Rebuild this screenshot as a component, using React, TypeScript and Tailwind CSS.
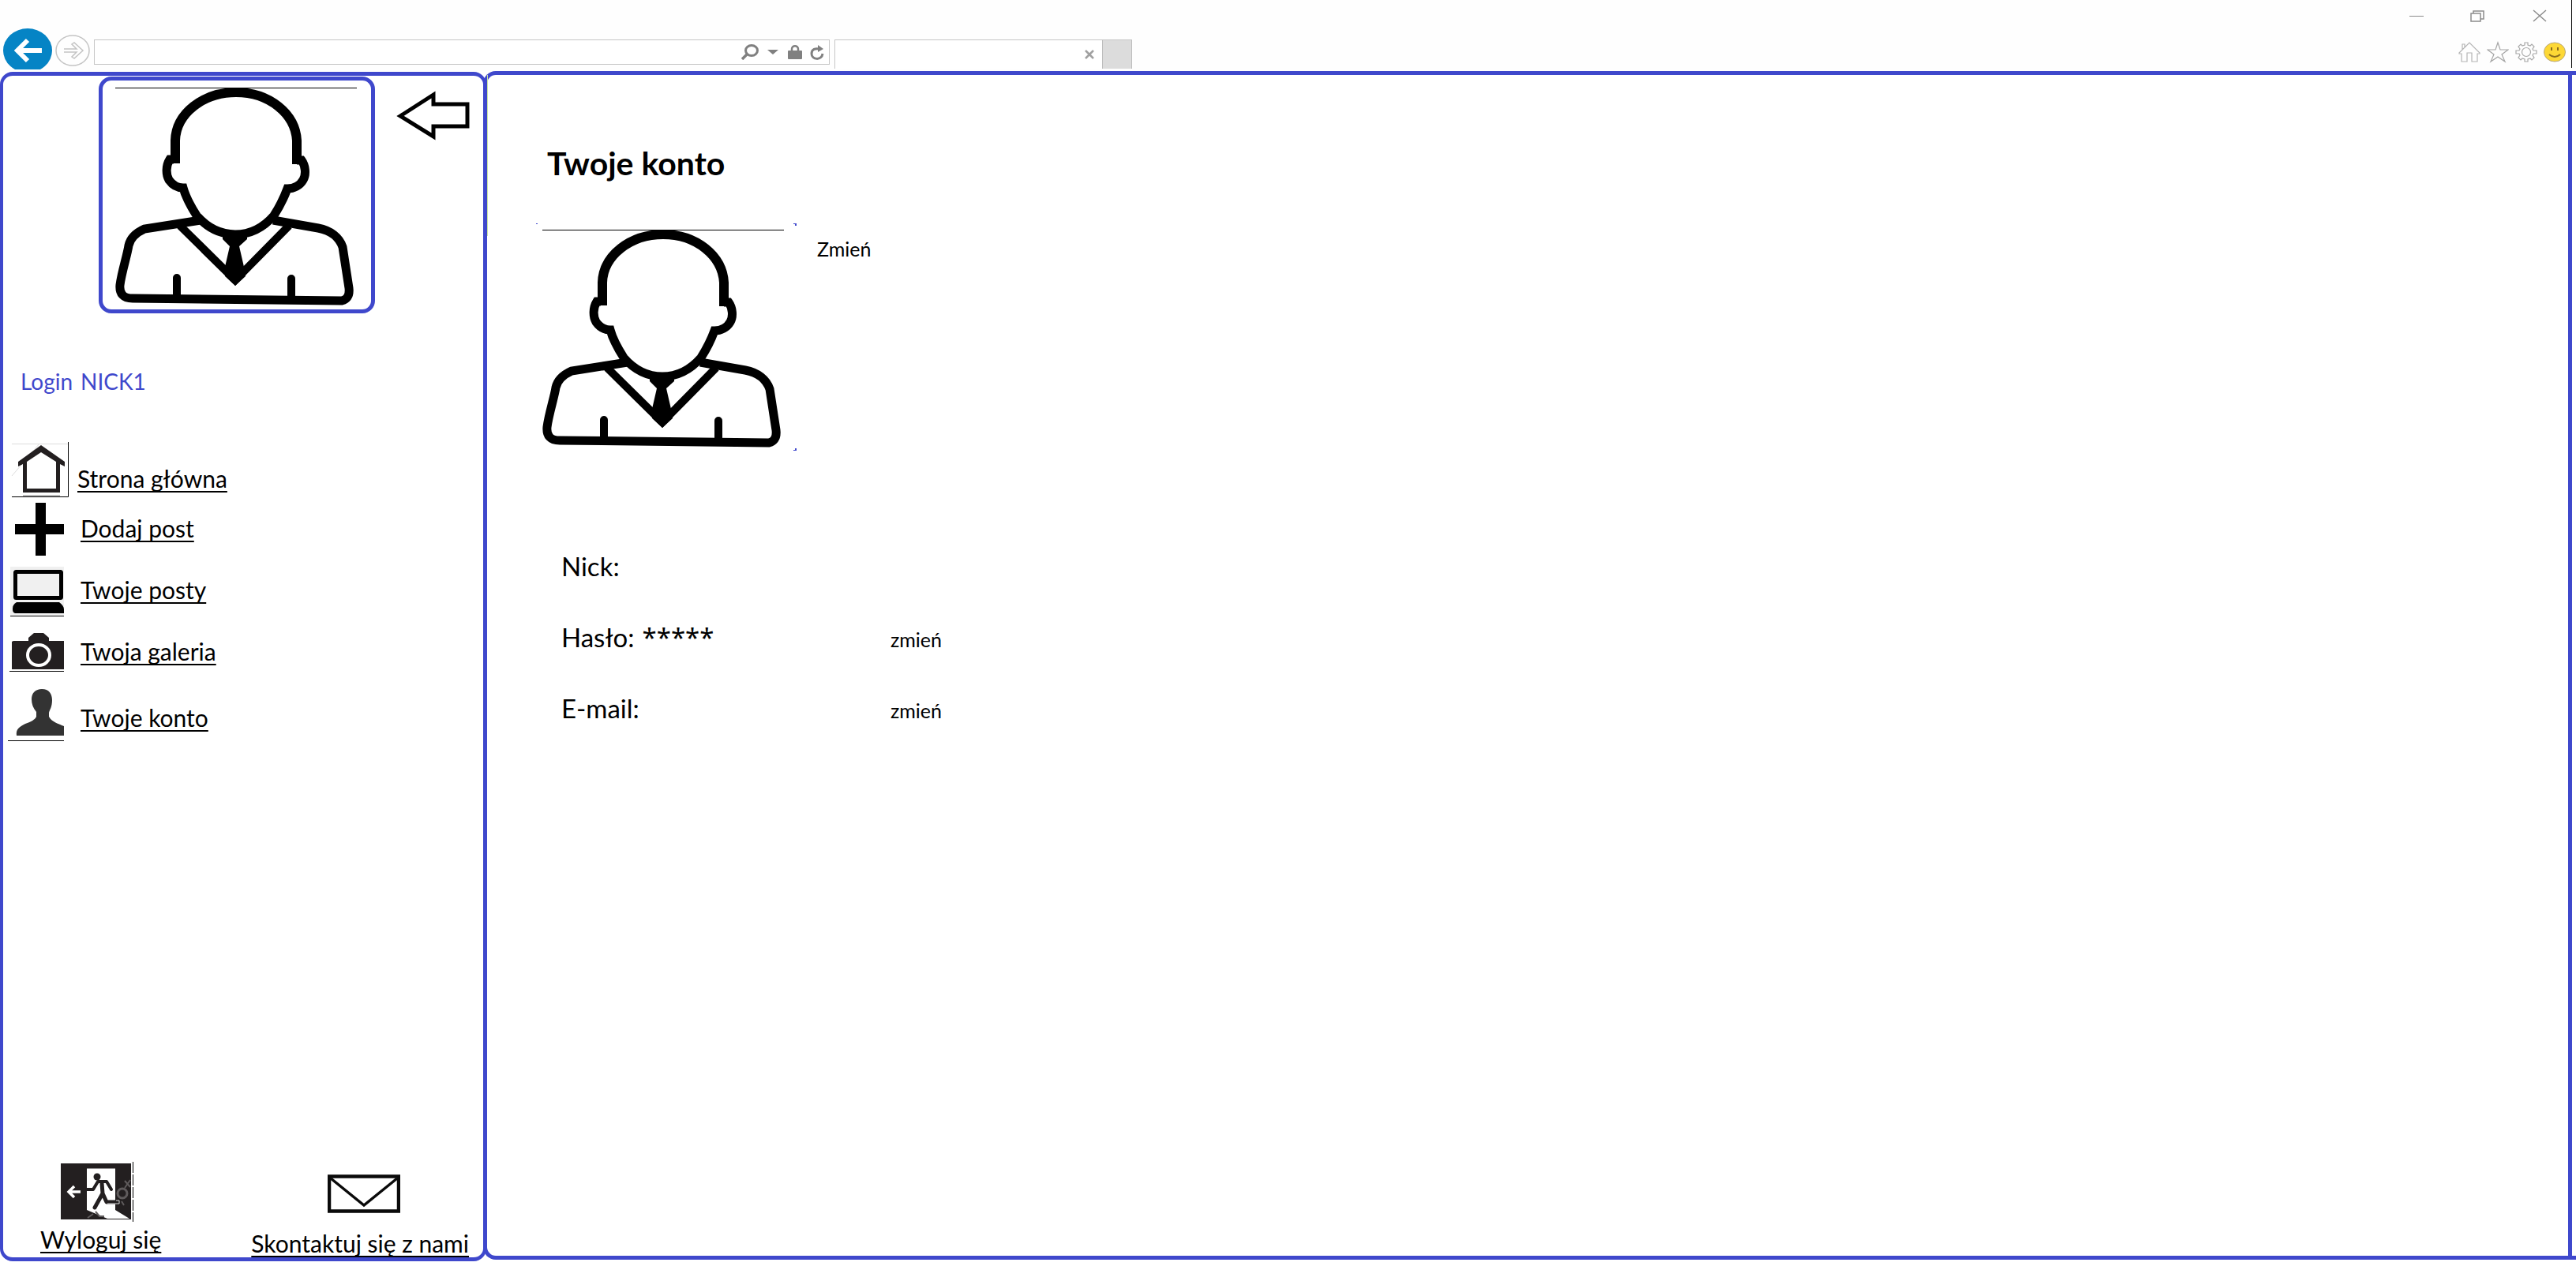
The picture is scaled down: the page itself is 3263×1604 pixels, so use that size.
import React from "react";

const BLUE = "#3f48cc";

function Portrait({ marks = false }: { marks?: boolean }) {
  return (
    <svg viewBox="137 103 330 288" className="block h-[288px] w-[330px]" fill="none" stroke="#000" role="img" aria-label="Avatar">
      <path d="M145 111.5H451" strokeWidth="1" />
      <g strokeWidth="11">
        <path d="M221 207V178C222 144 256 117 298 117S373 144 375 178V208" strokeWidth="12" />
        <path d="M219 202H214C209 210 209 221 213 228C218 235 225 238 231 238C234 249 241 262 248 273C261 288 278 297 297 297S333 288 346 273C353 262 359 250 363 239C371 239 379 235 383 228C387 221 386 210 381 203H375" />
        <path d="M253 279L182 290C171 295 164 302 162 311C160 324 153 345 151 361C150 372 155 378 167 378L432 381C439 379 442 374 441 365L433 313C429 301 418 292 402 289L345 279" />
        <path d="M227 286L297 355L365 286" strokeWidth="10" />
        <path d="M223 378V352M368 380V353" strokeLinecap="round" strokeWidth="10" />
      </g>
      <path d="M281 300H312V303L302 312L308 338L310 350L297 362L284 350L284 338L290 312L281 303Z" fill="#000" stroke="none" />
      {marks && (
        <path d="M137 103h2v1h-2zM463 103h4v3h-2v-2h-2zM463 390h2v-2h2v3h-4z" fill={BLUE} stroke="none" />
      )}
    </svg>
  );
}

function HomeDrawing() {
  return (
    <svg viewBox="10 560 80 72" className="h-[72px] w-[80px] shrink-0" aria-hidden="true">
      <path d="M15 562.5H86M50 562L15 603" stroke="#ddd" fill="none" />
      <path d="M86.5 560V629.5H15" stroke="#000" fill="none" />
      <path d="M52 564L82 585V591L76 588V624H29V588L23 591V585ZM52 573L34 585V619H71V585Z" fill="#231f20" fillRule="evenodd" />
      <path d="M29 628H76" stroke="#bbb" strokeWidth="2" />
    </svg>
  );
}

function PlusDrawing() {
  return (
    <svg viewBox="10 632 80 78" className="h-[78px] w-[80px] shrink-0" aria-hidden="true">
      <path d="M45 637H58V664H81V677H58V704H45V677H19V664H45Z" fill="#000" />
    </svg>
  );
}

function ComputerDrawing() {
  return (
    <svg viewBox="10 710 80 78" className="h-[78px] w-[80px] shrink-0" aria-hidden="true">
      <rect x="13" y="718" width="68" height="61" fill="#f0f0f0" />
      <rect x="19.5" y="724.5" width="58" height="33" rx="1" fill="#f0f0f0" stroke="#000" strokeWidth="5" />
      <path d="M21 763H75C79 766 81 769 81 772V777H19C16 776 16 773 16 771C16 767 18 765 21 763Z" fill="#000" />
      <path d="M13 780.5H81" stroke="#000" />
    </svg>
  );
}

function CameraDrawing() {
  return (
    <svg viewBox="10 788 80 78" className="h-[78px] w-[80px] shrink-0" aria-hidden="true">
      <path d="M15 813L17 812H36V808L43 802H55L62 808V812H81V848H15Z" fill="#231f20" />
      <ellipse cx="49" cy="830" rx="14" ry="13" fill="none" stroke="#fff" strokeWidth="4" />
      <path d="M12 850.5H81" stroke="#000" />
    </svg>
  );
}

function PersonDrawing() {
  return (
    <svg viewBox="10 866 80 90" className="h-[90px] w-[80px] shrink-0" aria-hidden="true">
      <path d="M53 873C62 873 66 879 66 887C66 896 63 899 62 903V908C66 915 74 917 81 920V932H21C20 924 24 921 32 917C40 914 44 912 46 908V902C42 897 40 892 40 886C40 878 45 873 53 873Z" fill="#333" />
      <path d="M10 938.5H81" stroke="#000" />
    </svg>
  );
}

function ExitDrawing() {
  return (
    <svg viewBox="0 0 94 76" className="ml-[25px] block h-[76px] w-[94px]" aria-hidden="true">
      <rect x="1" y="2" width="89" height="71" fill="#231f20" />
      <path d="M34 8.500H70V61L88 72H60L34 61Z" fill="#fff" />
      <path d="M26 38H12M18 31L11 38L18 45" fill="none" stroke="#fff" strokeWidth="3.500" />
      <circle cx="47" cy="19" r="4.500" fill="#231f20" />
      <path d="M34 35H42L48 25H59L65 35" fill="none" stroke="#231f20" strokeWidth="4" strokeLinejoin="round" strokeLinecap="round" />
      <path d="M53 27L54 40L44 58M54 40L59 51H73" fill="none" stroke="#231f20" strokeWidth="5" strokeLinejoin="round" strokeLinecap="round" />
      <path d="M71 49H75V53H60" fill="none" stroke="#ddd" strokeWidth="1" />
      <circle cx="79" cy="40" r="6" fill="none" stroke="#5f5b5c" strokeWidth="3" />
      <path d="M82 24L89 32M89 23L82 33M78 50L81 55M45 63L50 69L56 69M35 71L42 66" fill="none" stroke="#5f5b5c" strokeWidth="2" />
      <path d="M92.500 0V76" stroke="#000" strokeDasharray="14 2" />
    </svg>
  );
}

function EnvelopeDrawing() {
  return (
    <svg viewBox="0 0 92 49" className="ml-[10px] block h-[49px] w-[92px]" fill="none" stroke="#0a0a0a" aria-hidden="true">
      <rect x="2" y="2.500" width="88" height="44" strokeWidth="4.500" />
      <path d="M4 5L46 39L88 5" strokeWidth="3.500" />
    </svg>
  );
}

const navItems = [
  { label: "Strona główna", Icon: HomeDrawing, row: "h-[72px] items-end gap-2", text: "pb-2" },
  { label: "Dodaj post", Icon: PlusDrawing, row: "h-[78px] items-center gap-3", text: "pb-1" },
  { label: "Twoje posty", Icon: ComputerDrawing, row: "h-[78px] items-center gap-3", text: "pb-1" },
  { label: "Twoja galeria", Icon: CameraDrawing, row: "h-[78px] items-center gap-3", text: "pb-1" },
  { label: "Twoje konto", Icon: PersonDrawing, row: "h-[90px] items-center gap-3", text: "pb-1" },
];

const underlined =
  "whitespace-nowrap text-[30px] underline decoration-2 underline-offset-4 [text-decoration-skip-ink:none]";

function BrowserBar() {
  return (
    <header className="flex h-[90px] items-start justify-between bg-[#fefefe]">
      <div className="flex items-start pt-9 pl-1">
        <button aria-label="Wstecz" className="block">
          <svg viewBox="0 0 62 52" className="block h-[52px] w-[62px]">
            <ellipse cx="31" cy="28" rx="31" ry="28" fill="#0584c5" />
            <path d="M49 28H19M31 15L18 28L31 41" fill="none" stroke="#fff" strokeWidth="6" />
          </svg>
        </button>
        <button aria-label="Dalej" className="mt-2 ml-1 block">
          <svg viewBox="0 0 44 40" className="block h-[40px] w-[44px]" fill="none" stroke="#c4c4c4">
            <ellipse cx="22" cy="20" rx="21" ry="19" strokeWidth="1.500" />
            <path d="M11 18H27L21 12L24 10L35 20L24 30L21 28L27 22H11" strokeWidth="1.500" />
          </svg>
        </button>
        <div className="mt-[14px] ml-[5px] flex h-[32px] w-[932px] items-center border border-[#c6c6c6] bg-white pr-[6px]">
          <input aria-label="Adres" className="h-full min-w-0 flex-1 bg-transparent px-2 outline-none" />
          <div className="flex items-center gap-[10px] text-[#808080]">
            <button aria-label="Szukaj">
              <svg viewBox="0 0 24 20" className="block h-[20px] w-[24px]" fill="none" stroke="currentColor">
                <ellipse cx="14" cy="8" rx="7.500" ry="6.500" strokeWidth="3" />
                <path d="M8 13L2 19" strokeWidth="3.500" />
              </svg>
            </button>
            <button aria-label="Lista adresów">
              <svg viewBox="0 0 14 6" className="block h-[6px] w-[14px]"><path d="M0 0H14L7 6Z" fill="currentColor" /></svg>
            </button>
            <svg viewBox="0 0 18 18" className="ml-[2px] block h-[18px] w-[18px]" aria-hidden="true">
              <path d="M5 8V5C5 0 13 0 13 5V8" fill="none" stroke="currentColor" strokeWidth="2.500" />
              <rect x="0" y="7" width="18" height="11" rx="1" fill="currentColor" />
            </svg>
            <button aria-label="Odśwież">
              <svg viewBox="0 0 18 19" className="block h-[19px] w-[18px]">
                <path d="M16 11C15 20 2 19 2 11C2 5 7 4 12 5" fill="none" stroke="currentColor" strokeWidth="3" />
                <path d="M10 0L17 5L10 9Z" fill="currentColor" />
              </svg>
            </button>
          </div>
        </div>
        <div className="mt-[14px] ml-[6px] flex h-[37px] border-t border-l border-[#c6c6c6]">
          <div className="flex w-[338px] items-center justify-end bg-white pr-[10px]">
            <button aria-label="Zamknij kartę">
              <svg viewBox="0 0 12 12" className="block h-[12px] w-[12px]"><path d="M1 1L11 11M11 1L1 11" stroke="#a0a0a0" strokeWidth="2.500" /></svg>
            </button>
          </div>
          <button aria-label="Nowa karta" className="w-[38px] border-r border-l border-[#bcbcbc] bg-[#dcdcdc]" />
        </div>
      </div>
      <div className="mr-[5px] flex h-[86px] flex-col items-end border-r border-black">
        <div className="flex pt-[12px] pr-[31px] text-[#8c8c8c]">
          <button aria-label="Minimalizuj">
            <svg viewBox="0 0 18 16" className="block h-[16px] w-[18px]"><path d="M0 8.500H18" stroke="currentColor" /></svg>
          </button>
          <button aria-label="Przywróć" className="ml-[59px]">
            <svg viewBox="0 0 18 16" className="block h-[16px] w-[18px]" fill="none" stroke="currentColor" strokeWidth="1.500">
              <path d="M1 5H13V15H1ZM4 5V2H17V12H13" />
            </svg>
          </button>
          <button aria-label="Zamknij" className="ml-[61px]">
            <svg viewBox="0 0 18 16" className="block h-[16px] w-[18px]"><path d="M1 1L17 15M17 1L1 15" stroke="currentColor" strokeWidth="1.500" /></svg>
          </button>
        </div>
        <div className="mt-6 flex items-center gap-2 pr-[7px]">
          <button aria-label="Strona startowa">
            <svg viewBox="0 0 28 28" className="block h-[28px] w-[28px]" fill="none" stroke="#b4b4b4" strokeWidth="1.200">
              <path d="M1 15L14 2L27 15V16H24V26H17V15H11V26H4V16H1ZM5 11V4H8V8" />
            </svg>
          </button>
          <button aria-label="Ulubione">
            <svg viewBox="0 0 28 28" className="block h-[28px] w-[28px]" fill="none" stroke="#a4a4a4" strokeWidth="1.200">
              <path d="M14 2L17 11H27L19 17L23 26L14 20L5 26L9 17L1 11H11Z" />
            </svg>
          </button>
          <button aria-label="Narzędzia">
            <svg viewBox="0 0 28 28" className="block h-[28px] w-[28px]" fill="none" stroke="#a8a8a8" strokeWidth="1.200">
              <path d="M12 2H16V5L19 6L21 4L24 7L22 10L23 12H27V16H23L22 18L24 21L21 24L19 22L16 23V26H12V23L9 22L7 24L4 21L6 18L5 16H1V12H5L6 10L4 7L7 4L9 6L12 5Z" />
              <circle cx="14" cy="14" r="5.500" />
            </svg>
          </button>
          <button aria-label="Opinia">
            <svg viewBox="0 0 28 28" className="block h-[28px] w-[28px]">
              <ellipse cx="14" cy="14" rx="13.500" ry="12" fill="#fdd835" stroke="#b9a77a" />
              <path d="M10 8V12M18 8V12" stroke="#8a6d1d" strokeWidth="2" />
              <path d="M7 17Q14 23 21 17" fill="none" stroke="#8a6d1d" strokeWidth="2" />
            </svg>
          </button>
        </div>
      </div>
    </header>
  );
}

function Sidebar() {
  return (
    <aside className="mt-px flex w-[616px] shrink-0 flex-col rounded-[16px] border-x-4 border-y-5 border-[#3f48cc] text-[28px] leading-[36px]">
      <div className="flex items-start pt-px pl-[121px]">
        <div className="flex h-[300px] w-[350px] rounded-[16px] border-5 border-[#3f48cc] pt-px pl-2">
          <Portrait />
        </div>
        <button aria-label="Zwiń panel" className="mt-[17px] ml-[27px]">
          <svg viewBox="502 114 94 64" className="block h-[64px] w-[94px]" fill="none" stroke="#000" strokeWidth="5">
            <path d="M507 147L549 120V132H592V160H549V173Z" />
          </svg>
        </button>
      </div>
      <p className="mt-[68px] flex gap-[10px] pl-[22px] text-[#3f48cc]">
        <span>Login</span>
        <span>NICK1</span>
      </p>
      <nav className="mt-[59px] pl-[6px]">
        <ul>
          {navItems.map(({ label, Icon, row, text }) => (
            <li key={label}>
              <a href="#" className={`flex ${row}`}>
                <Icon />
                <span className={`${underlined} ${text}`}>{label}</span>
              </a>
            </li>
          ))}
        </ul>
      </nav>
      <div className="mt-auto flex items-end justify-between pr-[18px] pl-[47px]">
        <a href="#" className="flex flex-col items-start pb-[5px]">
          <ExitDrawing />
          <span className={`mt-[4px] ${underlined}`}>Wyloguj się</span>
        </a>
        <a href="#" className="flex flex-col items-center">
          <EnvelopeDrawing />
          <span className={`mt-[20px] ${underlined}`}>Skontaktuj się z nami</span>
        </a>
      </div>
    </aside>
  );
}

const fields = [
  { label: "Nick:", value: "", editable: false },
  { label: "Hasło:", value: "*****", editable: true },
  { label: "E-mail:", value: "", editable: true },
];

function AccountPanel() {
  return (
    <main className="mb-[2px] -ml-1 flex min-w-0 flex-1 rounded-l-[16px] border-y-5 border-l-5 border-[#3f48cc]">
      <div className="h-[204px] w-px bg-[#c9e3a4]" />
      <div className="mr-[5px] flex-1 border-r-5 border-[#3f48cc] pt-[88px] pl-[61px]">
        <h1 className="pl-[14px] text-[41px] leading-[48px] font-bold">Twoje konto</h1>
        <div className="mt-[52px] flex items-start">
          <Portrait marks />
          <button className="mt-[16px] ml-[26px] text-[25px] leading-[32px]">Zmień</button>
        </div>
        <dl className="mt-[122px] w-[514px] pl-[32px] text-[33px] leading-[48px]">
          {fields.map(({ label, value, editable }) => (
            <div key={label} className="flex h-[90px] items-baseline">
              <dt>{label}</dt>
              <dd className="flex flex-1 items-baseline justify-between pl-[10px]">
                <span className="font-['Noto_Sans',sans-serif] leading-[40px]">{value}</span>
                {editable && <button className="text-[25px]">zmień</button>}
              </dd>
            </div>
          ))}
        </dl>
      </div>
    </main>
  );
}

export default function App() {
  return (
    <div className="flex min-h-screen flex-col bg-white pb-[6px] font-['Lato','Noto_Sans',sans-serif] text-black">
      <BrowserBar />
      <div className="flex flex-1">
        <Sidebar />
        <AccountPanel />
      </div>
    </div>
  );
}
